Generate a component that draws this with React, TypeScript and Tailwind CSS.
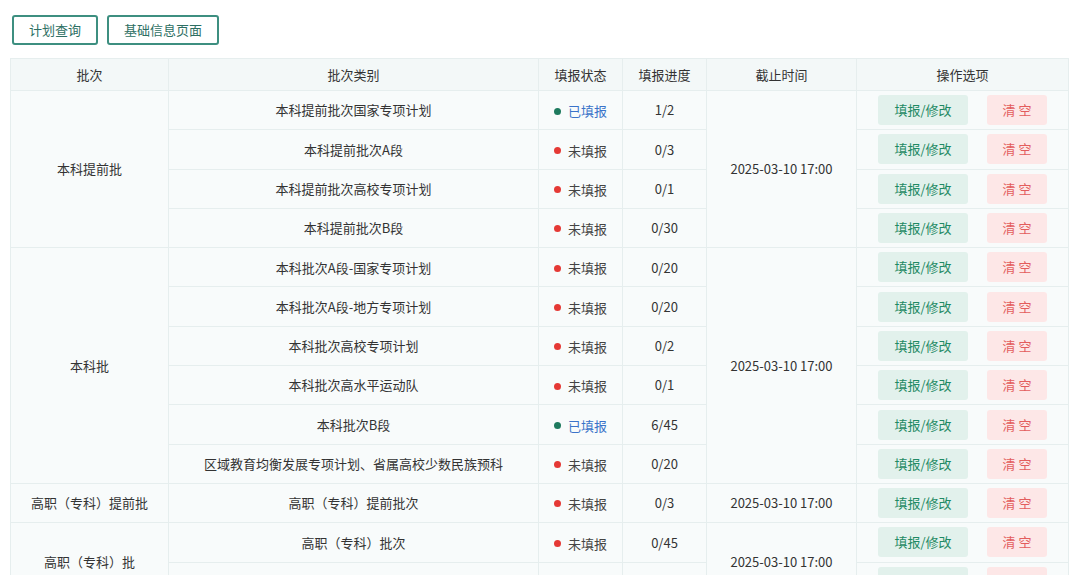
const font = { fontFamily: '"Noto Sans CJK SC", "Noto Sans", sans-serif' };

type Row = { name: string; done: boolean; prog: string };
type Group = { batch: string; rows: Row[] };

const groups: Group[] = [
  {
    batch: "本科提前批",
    rows: [
      { name: "本科提前批次国家专项计划", done: true, prog: "1/2" },
      { name: "本科提前批次A段", done: false, prog: "0/3" },
      { name: "本科提前批次高校专项计划", done: false, prog: "0/1" },
      { name: "本科提前批次B段", done: false, prog: "0/30" },
    ],
  },
  {
    batch: "本科批",
    rows: [
      { name: "本科批次A段-国家专项计划", done: false, prog: "0/20" },
      { name: "本科批次A段-地方专项计划", done: false, prog: "0/20" },
      { name: "本科批次高校专项计划", done: false, prog: "0/2" },
      { name: "本科批次高水平运动队", done: false, prog: "0/1" },
      { name: "本科批次B段", done: true, prog: "6/45" },
      { name: "区域教育均衡发展专项计划、省属高校少数民族预科", done: false, prog: "0/20" },
    ],
  },
  { batch: "高职（专科）提前批", rows: [{ name: "高职（专科）提前批次", done: false, prog: "0/3" }] },
  {
    batch: "高职（专科）批",
    rows: [
      { name: "高职（专科）批次", done: false, prog: "0/45" },
      { name: "高职（专科）批次少数民族预科", done: false, prog: "0/5" },
    ],
  },
];

const td = "border border-[#e6eeee] text-center text-[13px] text-[#333] h-[39.3px] p-0";

export default function App() {
  return (
    <div className="w-[1080px] h-[575px] overflow-hidden bg-white" style={font}>
      <div className="flex gap-[9px] pl-[12px] pt-[15px]">
        <button className="h-[30px] px-[15px] border-2 border-[#3d8f80] rounded-[3px] text-[13px] text-[#2d6f63]">计划查询</button>
        <button className="h-[30px] px-[15px] border-2 border-[#3d8f80] rounded-[3px] text-[13px] text-[#2d6f63]">基础信息页面</button>
      </div>
      <table className="ml-[10px] mt-[13px] w-[1058px] border-collapse table-fixed">
        <colgroup>
          <col className="w-[158px]" />
          <col className="w-[370px]" />
          <col className="w-[84px]" />
          <col className="w-[84px]" />
          <col className="w-[150px]" />
          <col className="w-[212px]" />
        </colgroup>
        <thead>
          <tr className="bg-[#f3f8f8]">
            {["批次", "批次类别", "填报状态", "填报进度", "截止时间", "操作选项"].map((h) => (
              <th key={h} className="border border-[#e6eeee] h-[32px] font-normal text-[13px] text-[#333]">{h}</th>
            ))}
          </tr>
        </thead>
        <tbody className="bg-[#f8fbfb]">
          {groups.map((g) =>
            g.rows.map((r, i) => (
              <tr key={g.batch + i}>
                {i === 0 && (
                  <td rowSpan={g.rows.length} className={td}>{g.batch}</td>
                )}
                <td className={td}>{r.name}</td>
                <td className={td}>
                  <span className="inline-flex items-center gap-[7px]">
                    <span className={`w-[7px] h-[7px] rounded-full ${r.done ? "bg-[#1e7a5e]" : "bg-[#e53935]"}`} />
                    <span className={r.done ? "text-[#3a73c9]" : "text-[#444]"}>{r.done ? "已填报" : "未填报"}</span>
                  </span>
                </td>
                <td className={td}>{r.prog}</td>
                {i === 0 && (
                  <td rowSpan={g.rows.length} className={td}>2025-03-10 17:00</td>
                )}
                <td className={td}>
                  <div className="flex justify-center gap-[19px]">
                    <span className="w-[90px] h-[30px] leading-[30px] rounded-[3px] bg-[#e2f1ec] text-[#1f8a64]">填报/修改</span>
                    <span className="w-[60px] h-[30px] leading-[30px] rounded-[3px] bg-[#fde7e7] text-[#e35d5d]">清 空</span>
                  </div>
                </td>
              </tr>
            ))
          )}
        </tbody>
      </table>
    </div>
  );
}
